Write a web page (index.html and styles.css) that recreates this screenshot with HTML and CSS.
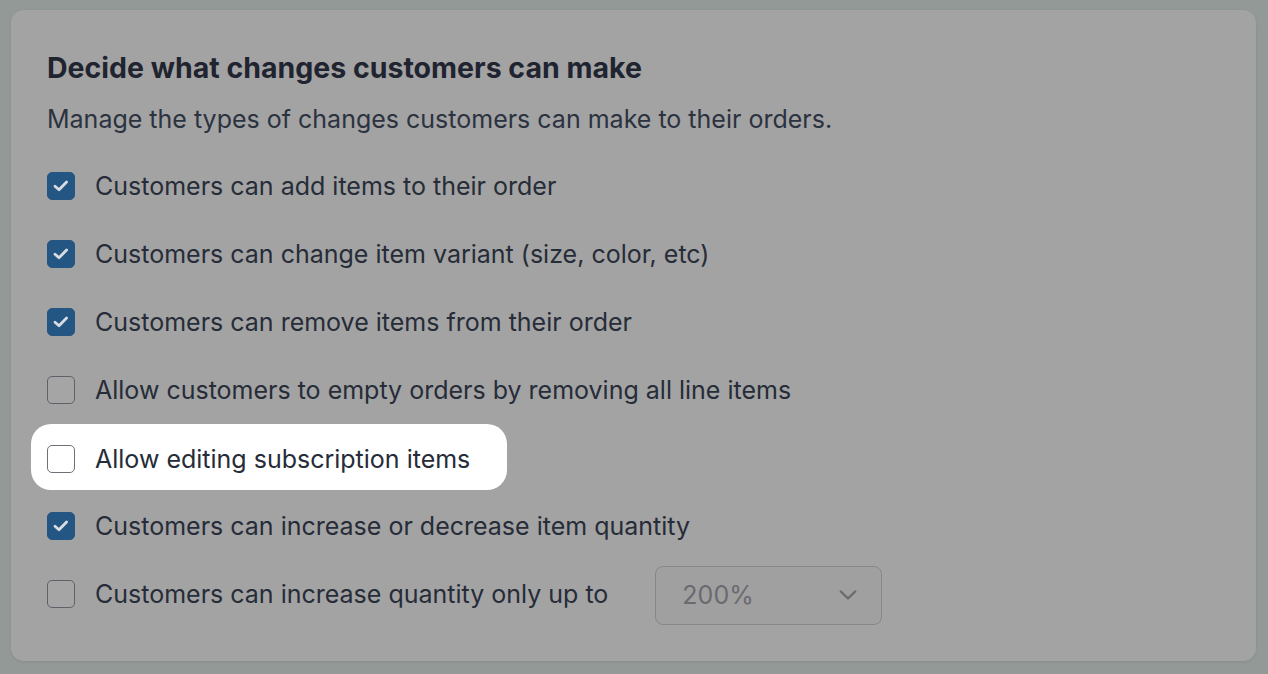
FILE: index.html
```html
<!DOCTYPE html>
<html lang="en">
<head>
<meta charset="utf-8">
<title>Order editing settings</title>
<link rel="stylesheet" href="styles.css">
</head>
<body>
<section class="card">
  <h2 class="title">Decide what changes customers can make</h2>
  <p class="subtitle">Manage the types of changes customers can make to their orders.</p>
  <ul class="options">
    <li class="row"><span class="box checked"><svg viewBox="0 0 16 16" width="16" height="16"><path d="M2 8.2l4 3.5 7.6-7.6" fill="none" stroke="currentColor" stroke-width="2.8" stroke-linecap="round" stroke-linejoin="round"/></svg></span><span class="label">Customers can add items to their order</span></li>
    <li class="row"><span class="box checked"><svg viewBox="0 0 16 16" width="16" height="16"><path d="M2 8.2l4 3.5 7.6-7.6" fill="none" stroke="currentColor" stroke-width="2.8" stroke-linecap="round" stroke-linejoin="round"/></svg></span><span class="label">Customers can change item variant (size, color, etc)</span></li>
    <li class="row"><span class="box checked"><svg viewBox="0 0 16 16" width="16" height="16"><path d="M2 8.2l4 3.5 7.6-7.6" fill="none" stroke="currentColor" stroke-width="2.8" stroke-linecap="round" stroke-linejoin="round"/></svg></span><span class="label">Customers can remove items from their order</span></li>
    <li class="row"><span class="box"></span><span class="label">Allow customers to empty orders by removing all line items</span></li>
    <li class="row"><span class="spot"><span class="box light"></span><span class="label">Allow editing subscription items</span></span></li>
    <li class="row"><span class="box checked"><svg viewBox="0 0 16 16" width="16" height="16"><path d="M2 8.2l4 3.5 7.6-7.6" fill="none" stroke="currentColor" stroke-width="2.8" stroke-linecap="round" stroke-linejoin="round"/></svg></span><span class="label">Customers can increase or decrease item quantity</span></li>
    <li class="row"><span class="box"></span><span class="label">Customers can increase quantity only up to</span>
      <span class="select"><span class="select-value">200%</span><svg class="chev" viewBox="0 0 20 20" width="20" height="20"><path d="M2.8 6.5l7.2 7 7.2-7" fill="none" stroke="currentColor" stroke-width="2.4" stroke-linecap="round" stroke-linejoin="round"/></svg></span>
    </li>
  </ul>
</section>
</body>
</html>
```
FILE: styles.css
```css
html, body {
  margin: 0;
  padding: 0;
}
body {
  background: #929996;
  font-family: Inter, "Noto Sans", "Liberation Sans", sans-serif;
  color: #262c38;
  width: 1268px;
  height: 674px;
  overflow: hidden;
  padding: 10px 12px 0 11px;
  box-sizing: border-box;
}
.card {
  background: #a3a3a3;
  border-radius: 13px;
  height: 651px;
  box-sizing: border-box;
  padding: 41px 36px 0 36px;
  box-shadow: 0 1px 3px rgba(0,0,0,0.08);
}
.title {
  margin: 0;
  font-size: 28.5px;
  line-height: 34px;
  font-weight: 700;
  color: #1f2430;
}
.subtitle {
  margin: 18px 0 17px;
  font-size: 25px;
  line-height: 32px;
  color: #2b3240;
}
.options {
  list-style: none;
  margin: 0;
  padding: 0;
}
.row {
  display: flex;
  align-items: center;
  height: 68px;
  font-size: 25px;
}
.box {
  width: 28px;
  height: 28px;
  box-sizing: border-box;
  border: 1.2px solid #5e6168;
  border-radius: 5px;
  flex: none;
  display: flex;
  align-items: center;
  justify-content: center;
  background: #a5a5a5;
}
.box svg {
  display: block;
  flex: none;
  margin-left: -1px;
}
.box.checked {
  background: #245683;
  border-color: #245683;
  color: #d9dde2;
}
.box.light {
  background: #ffffff;
  border-color: #6d7077;
}
.label {
  margin-left: 20px;
  white-space: nowrap;
}
.spot {
  display: flex;
  align-items: center;
  background: #ffffff;
  border-radius: 20px;
  height: 66px;
  box-sizing: border-box;
  margin: -2px 0 0 -16px;
  padding: 4px 37px 0 16px;
}
.select {
  margin-left: 47px;
  width: 227px;
  height: 59px;
  box-sizing: border-box;
  border: 1px solid #878787;
  border-radius: 8px;
  background: #a0a0a0;
  display: flex;
  align-items: center;
  justify-content: space-between;
  padding: 0 23px 0 26px;
  color: #6a6a6f;
  margin-top: 2px;
}
.select-value {
  font-size: 25px;
}
.chev {
  display: block;
}
```
